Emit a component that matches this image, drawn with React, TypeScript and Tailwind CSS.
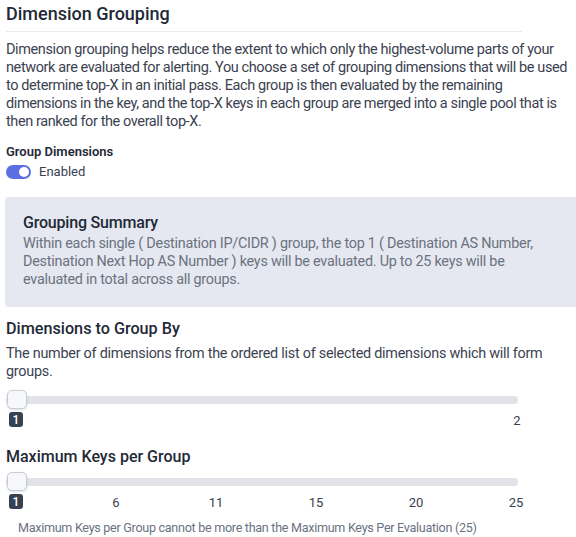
import React from 'react';

const font = { fontFamily: 'Roboto, "Noto Sans", sans-serif' };

function Slider({ top, labels }: { top?: string; labels: string[] }) {
  return (
    <div className={top}>
      <div className="relative h-[20px] w-[512px] ml-[6px]">
        <div className="absolute left-0 right-0 top-[6px] h-[8px] rounded-full bg-[#e2e3e8]" />
        <div className="absolute left-[1px] top-0 h-[19px] w-[20px] rounded-[5px] border border-[#c9ccd4] bg-[#f7f8fa] shadow-sm" />
      </div>
      {labels.length === 2 ? (
        <div className="mt-[2px] ml-[6px] flex w-[521px] justify-between">
          <Badge />
          <span className="w-[20px] pt-[1px] text-center text-[13px] leading-[16px] text-[#374151]">{labels[1]}</span>
        </div>
      ) : (
        <div className="mt-[2px] ml-[6px] flex gap-[80px]">
          <Badge />
          {labels.slice(1).map((l) => (
            <span key={l} className="w-[20px] pt-[1px] text-center text-[13px] leading-[16px] text-[#374151]">
              {l}
            </span>
          ))}
        </div>
      )}
    </div>
  );
}

function Badge() {
  return (
    <div className="flex w-[20px] justify-center">
      <span className="flex h-[15px] w-[14px] items-center justify-center rounded-[3px] bg-[#374151] text-[12px] font-medium leading-none text-white">
        1
      </span>
    </div>
  );
}

export default function App() {
  return (
    <div className="min-h-screen w-[576px] overflow-hidden bg-white" style={font}>
      <div className="pt-[2px]">
        <h2 className="pl-[6px] text-[18px] font-medium leading-[24px] text-[#1f2937]">Dimension Grouping</h2>
        <div className="ml-[6px] mt-[5px] h-px w-[516px] bg-[#e8eaee]" />
        <p className="mt-[9px] pl-[6px] text-[14.5px] leading-[18px] tracking-[-0.4px] text-[#3b4250]">
          Dimension grouping helps reduce the extent to which only the highest-volume parts of your network are
          evaluated for alerting. You choose a set of grouping dimensions that will be used to determine top-X in an
          initial pass. Each group is then evaluated by the remaining dimensions in the key, and the top-X keys in each
          group are merged into a single pool that is then ranked for the overall top-X.
        </p>

        <div className="mt-[13px] pl-[6px]">
          <div className="text-[13px] font-semibold leading-[16px] text-[#1f2937]">Group Dimensions</div>
          <div className="mt-[4px] flex items-center gap-[8px]">
            <div className="flex h-[14px] w-[25px] items-center justify-end rounded-full bg-[#5b6fe3] pr-[2px]">
              <div className="h-[10px] w-[10px] rounded-full bg-white" />
            </div>
            <span className="text-[13px] leading-[16px] text-[#374151]">Enabled</span>
          </div>
        </div>

        <div className="ml-[5px] mt-[17px] h-[110px] rounded-l-[4px] bg-[#e5e8f0] pl-[18px] pt-[15px]">
          <div className="text-[16px] font-medium leading-[22px] tracking-[-0.2px] text-[#1f2937]">Grouping Summary</div>
          <p className="mt-[1px] pr-[20px] text-[14.4px] leading-[18px] tracking-[-0.25px] text-[#6b7280]">
            Within each single ( Destination IP/CIDR ) group, the top 1 ( Destination AS Number, Destination Next Hop AS
            Number ) keys will be evaluated. Up to 25 keys will be evaluated in total across all groups.
          </p>
        </div>

        <h3 className="mt-[11px] pl-[6px] text-[16.2px] font-medium leading-[22px] text-[#1f2937]">
          Dimensions to Group By
        </h3>
        <p className="mt-[5px] pl-[6px] pr-[20px] text-[14.4px] leading-[18px] tracking-[-0.25px] text-[#3b4250]">
          The number of dimensions from the ordered list of selected dimensions which will form groups.
        </p>
        <Slider top="mt-[9px]" labels={['1', '2']} />

        <h3 className="mt-[17px] pl-[6px] text-[16px] font-medium leading-[22px] text-[#1f2937]">
          Maximum Keys per Group
        </h3>
        <Slider top="mt-[4px]" labels={['1', '6', '11', '15', '20', '25']} />
        <p className="mt-[9px] pl-[18px] text-[12.6px] leading-[16px] tracking-[-0.3px] text-[#6b7280]">
          Maximum Keys per Group cannot be more than the Maximum Keys Per Evaluation (25)
        </p>
      </div>
    </div>
  );
}
